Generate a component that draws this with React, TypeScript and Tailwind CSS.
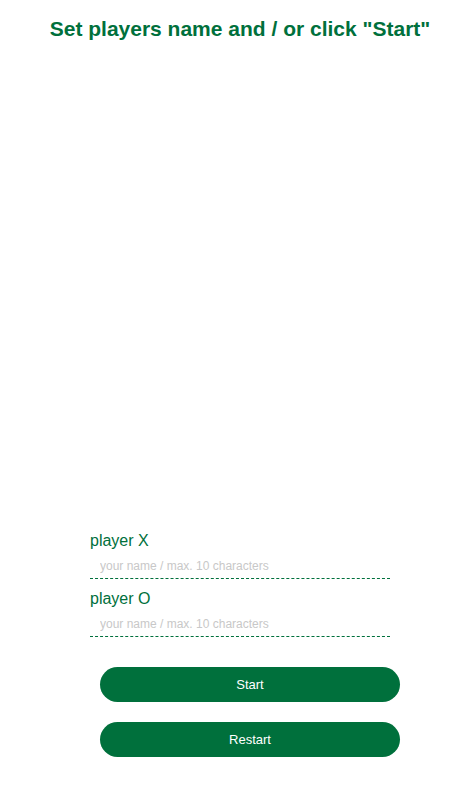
const players = ["X", "O"];

export default function App() {
  return (
    <div className="min-h-screen bg-white font-['Liberation_Sans',Arial,sans-serif] text-[#00703c]">
      <h1 className="pl-1 pt-[15px] text-center text-[21px] font-bold leading-7">
        Set players name and / or click "Start"
      </h1>

      {/* empty board area */}
      <div className="h-[486px]" />

      <form className="mx-auto w-[300px] translate-x-[2px]" onSubmit={(e) => e.preventDefault()}>
        {players.map((p, i) => (
          <div key={p} className={i > 0 ? "mt-2" : ""}>
            <label className="block text-[16px] leading-6">player {p}</label>
            <input
              type="text"
              maxLength={10}
              placeholder="your name / max. 10 characters"
              className="block h-[26px] w-full border-b border-dashed border-[#00703c] bg-transparent pl-[10px] text-[12px] text-[#00703c] outline-none placeholder:text-[#c8c8c8]"
            />
          </div>
        ))}

        <div className="ml-[10px] mt-[30px] flex flex-col gap-5">
          <button
            type="submit"
            className="h-[35px] w-[300px] rounded-full bg-[#00703c] text-[13px] text-white"
          >
            Start
          </button>
          <button
            type="button"
            className="h-[35px] w-[300px] rounded-full bg-[#00703c] text-[13px] text-white"
          >
            Restart
          </button>
        </div>
      </form>
    </div>
  );
}
